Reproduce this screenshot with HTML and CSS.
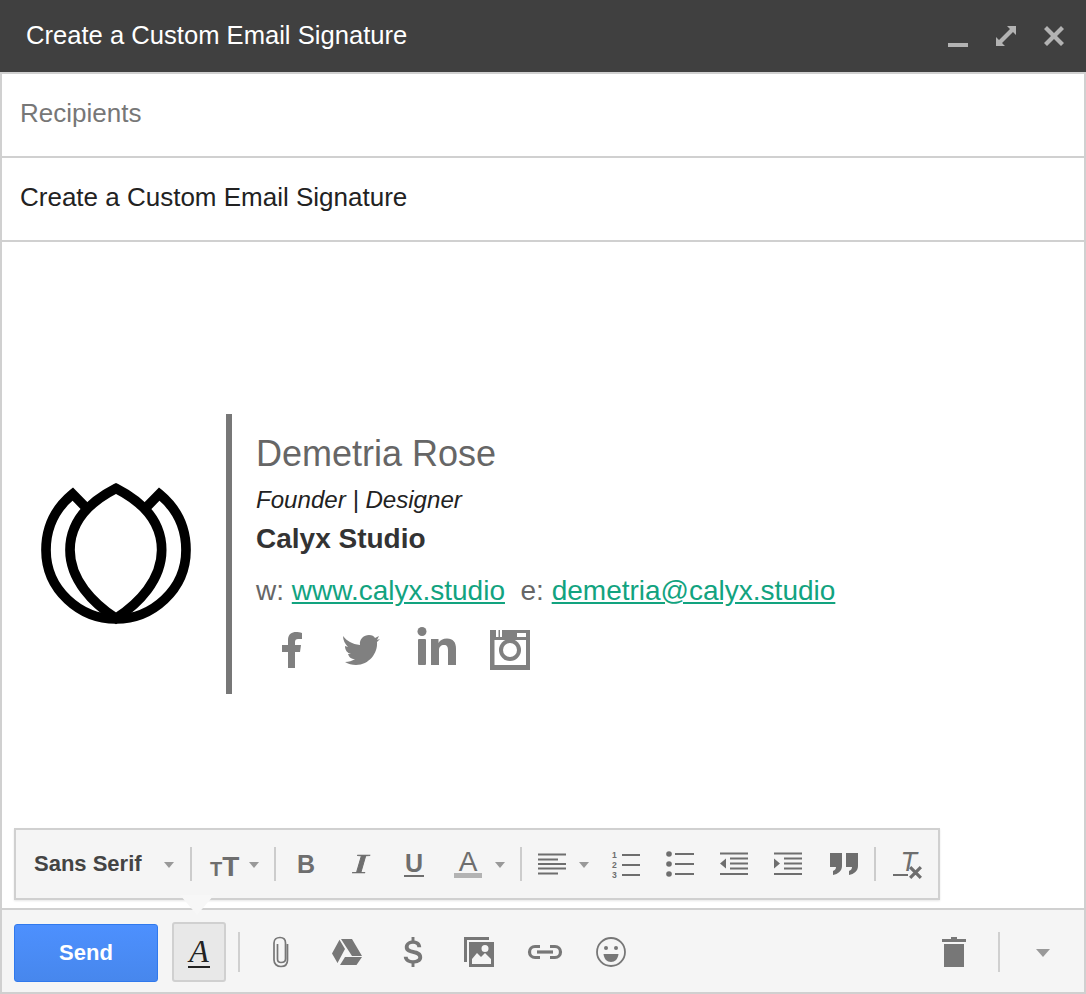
FILE: index.html
```html
<!DOCTYPE html>
<html lang="en">
  <head>
    <meta charset="UTF-8" />
    <meta name="viewport" content="width=device-width, initial-scale=1.0" />
    <title>Create a Custom Email Signature</title>
    <link rel="stylesheet" href="styles.css">
  </head>
  <body>
    <div class="compose">
      <div class="title-bar">
        <span class="title-text">Create a Custom Email Signature</span>
        <div class="title-icons">
          <svg class="title-icon" viewBox="0 0 24 24"><rect x="2" y="19" width="20" height="4" /></svg>
          <svg class="title-icon" viewBox="0 0 24 24"><path d="M2 22V13L5 16L16 5L13 2H22V11L19 8L8 19L11 22Z" /></svg>
          <svg class="title-icon" viewBox="0 0 24 24"><path d="M5 2L12 9L19 2L22 5L15 12L22 19L19 22L12 15L5 22L2 19L9 12L2 5Z" /></svg>
        </div>
      </div>

      <div class="panel">
        <div class="field field-muted">Recipients</div>
        <div class="field">Create a Custom Email Signature</div>

        <div class="message">
          <div class="signature">
            <svg class="logo" viewBox="0 0 570 510" fill="none" stroke="#000" stroke-width="29">
              <path d="M288 55C200 100 150 160 150 240C150 330 220 400 288 445C356 400 425 330 425 240C425 160 376 100 288 55Z" />
              <path d="M195 110L158 72C100 120 78 180 78 240C78 360 180 447 288 447C396 447 498 360 498 240C498 180 476 120 418 72L381 110" />
            </svg>
            <div class="sig-info">
              <div class="sig-name">Demetria Rose</div>
              <div class="sig-role">Founder | Designer</div>
              <div class="sig-company">Calyx Studio</div>
              <div class="sig-contact">
                w: <a href="#">www.calyx.studio</a>&nbsp; e: <a href="#">demetria@calyx.studio</a>
              </div>
              <div class="sig-social">
                <svg class="social-f" viewBox="0 0 20 36"><path d="M6 36V20H0V13H6V8C6 2 10 0 14 0C16 0 18 0 20 1V7H16C14 7 13 8 13 10V13H19L18 20H13V36Z" /></svg>
                <svg class="social-tw" viewBox="0 0 37 31"><path d="M0 2C4 7 9 10 17 11C16 5 21 1 26 1C29 1 31 2 32 4L36 2L34 6L37 5L34 8C35 19 26 31 13 31C9 31 5 30 2 28C6 28 9 27 12 25C8 25 6 23 5 20H8C4 19 2 16 2 12L5 13C2 10 0 6 0 2Z" /></svg>
                <svg class="social-in" viewBox="0 0 39 38"><circle cx="5" cy="4.500" r="4.500" /><rect x="1" y="12" width="8" height="26" rx="1" /><path d="M14 12H21.500V16C23 13 26 11.500 30 11.500C36 11.500 39 15 39 22V38H31V23C31 20 30 18 27 18C24 18 22 20 22 23V38H14Z" /></svg>
                <svg class="social-ig" viewBox="0 0 40 40">
                  <rect width="40" height="40" />
                  <rect class="ig-cut" x="4.500" y="9" width="31.500" height="26" />
                  <rect class="ig-cut" x="6" y="0" width="2.500" height="10" />
                  <rect class="ig-cut" x="10" y="0" width="2" height="10" />
                  <rect class="ig-cut" x="27" y="3" width="9" height="4" />
                  <path d="M4 7H36V10H4Z" />
                  <circle cx="20" cy="20" r="11" />
                  <circle class="ig-cut" cx="20" cy="20" r="7" />
                </svg>
              </div>
            </div>
          </div>

          <div class="format-bar">
            <span class="font-name">Sans Serif</span>
            <span class="caret caret-font"></span>
            <span class="sep"></span>
            <span class="fmt-size"><span class="glyph-small">T</span><span class="glyph-big">T</span></span>
            <span class="caret"></span>
            <span class="sep sep-size"></span>
            <span class="fmt-btn fmt-first"><span class="glyph-b">B</span></span>
            <span class="fmt-btn"><span class="glyph-i">I</span></span>
            <span class="fmt-btn"><span class="glyph-u">U</span></span>
            <span class="fmt-btn"><span class="glyph-a">A</span></span>
            <span class="caret"></span>
            <span class="sep sep-align"></span>
            <span class="fmt-align">
              <svg class="icon" viewBox="0 0 30 22"><path d="M1 1.500H29M1 6.500H21M1 11H29M1 15.500H29M1 20.500H21" class="lines" /></svg>
            </span>
            <span class="caret caret-align"></span>
            <span class="fmt-btn fmt-numbered">
              <span class="num-list">1<br />2<br />3</span>
              <svg class="num-lines" viewBox="0 0 18 24"><path d="M0 2H18M0 12H18M0 22H18" class="lines" /></svg>
            </span>
            <span class="fmt-btn">
              <svg class="icon" viewBox="0 0 28 24"><circle cx="3" cy="2" r="2.800" /><circle cx="3" cy="12" r="2.800" /><circle cx="3" cy="22" r="2.800" /><path d="M9 2H28M9 12H28M9 22H28" class="lines" /></svg>
            </span>
            <span class="fmt-btn">
              <svg class="icon" viewBox="0 0 28 24"><path d="M0 1.500H28M10 6.500H28M10 11.500H28M10 16.500H28M0 22H28" class="lines" /><path d="M6 6.500V16.500L0 11.500Z" /></svg>
            </span>
            <span class="fmt-btn">
              <svg class="icon" viewBox="0 0 28 24"><path d="M0 1.500H28M10 6.500H28M10 11.500H28M10 16.500H28M0 22H28" class="lines" /><path d="M0 6.500V16.500L6 11.500Z" /></svg>
            </span>
            <span class="fmt-btn fmt-quote">
              <svg class="icon" viewBox="0 0 28 22"><path d="M0 0H12V13C12 18 8 21 3 22V18C5 17 6 16 6 14H0ZM16 0H28V13C28 18 24 21 19 22V18C21 17 22 16 22 14H16Z" /></svg>
            </span>
            <span class="sep sep-clear"></span>
            <span class="fmt-btn">
              <span class="clear-format"><span class="glyph-tx">T</span>
                <svg class="clear-x" viewBox="0 0 14 14"><path d="M2 2L12 12M12 2L2 12" class="lines-bold" /></svg>
              </span>
            </span>
          </div>
        </div>

        <div class="footer">
          <span class="notch"></span>
          <button class="send-btn">Send</button>
          <button class="format-toggle"><span>A</span></button>
          <span class="footer-sep"></span>
          <span class="tool">
            <svg class="tool-clip" viewBox="0 0 18 32"><path d="M15.500 8V24C15.500 28 13 30.500 9 30.500C5 30.500 2 28 2 24V7C2 3.500 4.500 1.500 8 1.500C11.500 1.500 13.500 3.500 13.500 7V23C13.500 25 12 26.500 9 26.500C6.500 26.500 5.500 25 5.500 23V8" fill="none" stroke="#777" stroke-width="1.700" /></svg>
          </span>
          <span class="tool">
            <svg class="tool-icon" viewBox="0 0 30 26"><path d="M9 0H20L30 17H20ZM7.500 0.800L13 10L5.500 24L0 14.500ZM13 18H30L24.500 26H8Z" /></svg>
          </span>
          <span class="tool">
            <svg class="tool-icon" viewBox="0 0 19 31"><path d="M8 0H11V3.500C15 4 18 6.500 18 10.500H14C14 8.500 12.500 7 9.500 7C6.500 7 5 8.200 5 10C5 11.800 6.500 12.800 10 13.500C15 14.500 19 16 19 21C19 25 16 27 11 27.500V31H8V27.500C4 27 0 24.500 0 20.500H4C4 22.800 6 24 9.500 24C13 24 15 22.800 15 21C15 19 13 18 9 17.200C4 16.200 1 14.500 1 10.500C1 6.800 4 4 8 3.500Z" /></svg>
          </span>
          <span class="tool">
            <svg class="tool-icon" viewBox="0 0 30 30"><path d="M0 0H25V3H3V25H0Z" /><path fill-rule="evenodd" d="M5 5H30V30H5ZM21 8A3.500 3.500 0 1 0 21 15A3.500 3.500 0 1 0 21 8ZM8 27H27V22L21 16L17 20L13 16L8 22Z" /></svg>
          </span>
          <span class="tool">
            <svg class="tool-link" viewBox="0 0 36 16" fill="none" stroke="#777"><path d="M13 2.500H8A5.500 5.500 0 0 0 8 13.500H13M23 2.500H28A5.500 5.500 0 0 1 28 13.500H23" stroke-width="3.200" /><path d="M10 8H26" stroke-width="3.200" /></svg>
          </span>
          <span class="tool">
            <svg class="tool-icon" viewBox="0 0 30 30"><circle cx="15" cy="15" r="14" fill="none" stroke="#777" stroke-width="1.800" /><circle cx="10" cy="11" r="2" /><circle cx="20" cy="11" r="2" /><path d="M7.500 17H22.500C22 22 19 25 15 25C11 25 8 22 7.500 17Z" /></svg>
          </span>
          <span class="trash">
            <svg class="tool-icon" viewBox="0 0 24 30"><path d="M9 0H15V2H24V5H0V2H9ZM2 7H22V30H2Z" /></svg>
          </span>
          <span class="footer-sep"></span>
          <span class="more-caret"></span>
        </div>
      </div>
    </div>
  </body>
</html>
```

FILE: styles.css
```css
* {
  box-sizing: border-box;
}

body {
  margin: 0;
  font-family: "Liberation Sans", Arial, sans-serif;
}

.compose {
  display: flex;
  flex-direction: column;
  height: 994px;
}

.title-bar {
  display: flex;
  align-items: center;
  justify-content: space-between;
  height: 72px;
  padding: 0 20px 2px 26px;
  background-color: #404040;
}

.title-text {
  color: #fff;
  font-size: 25.600px;
}

.title-icons {
  display: flex;
  gap: 24px;
  margin-top: 2px;
}

.title-icon {
  width: 24px;
  height: 24px;
  fill: #b3b3b3;
}

.panel {
  flex: 1;
  display: flex;
  flex-direction: column;
  min-height: 0;
  border: 2px solid #d0d0d0;
}

.field {
  display: flex;
  align-items: center;
  height: 84px;
  padding: 0 18px 4px;
  border-bottom: 2px solid #d0d0d0;
  font-size: 26px;
  color: #222;
}

.field-muted {
  color: #777;
}

.message {
  flex: 1;
  display: flex;
  flex-direction: column;
  min-height: 0;
  padding-top: 172px;
}

.signature {
  display: flex;
  align-items: center;
}

.logo {
  width: 190px;
  height: 170px;
  margin: 2px 16px 0 18px;
  filter: blur(0.4px);
}

.sig-info {
  height: 280px;
  padding: 20px 0 0 24px;
  border-left: 6px solid #777;
}

.sig-name {
  font-size: 36px;
  line-height: 40px;
  color: #666;
}

.sig-role {
  margin-top: 12px;
  font-size: 24.100px;
  line-height: 28px;
  font-style: italic;
  color: #222;
}

.sig-company {
  margin-top: 9px;
  font-size: 28px;
  line-height: 32px;
  font-weight: bold;
  color: #333;
}

.sig-contact {
  margin-top: 21px;
  font-size: 28px;
  line-height: 30px;
  color: #666;
}

.sig-contact a {
  color: #12a37f;
}

.sig-social {
  display: flex;
  align-items: flex-start;
  height: 44px;
  margin-top: 21px;
  fill: #808080;
  filter: blur(0.5px);
}

.social-f {
  width: 20px;
  height: 36px;
  margin: 5px 0 0 26px;
}

.social-tw {
  width: 37px;
  height: 31px;
  margin: 7px 0 0 41px;
}

.social-in {
  width: 39px;
  height: 38px;
  margin: 0 0 0 37px;
}

.social-ig {
  width: 40px;
  height: 40px;
  margin: 3px 0 0 34px;
}

.ig-cut {
  fill: #fff;
}

.format-bar {
  display: flex;
  align-items: center;
  width: 926px;
  height: 72px;
  margin: auto 0 8px 12px;
  padding-left: 18px;
  background-color: #f5f5f5;
  border: 2px solid #d0d0d0;
  fill: #6e6e6e;
  box-shadow: 0 1px 2px rgba(0, 0, 0, 0.1);
}

.font-name {
  width: 108px;
  font-size: 22px;
  font-weight: bold;
  color: #444;
}

.caret {
  width: 0;
  height: 0;
  border-left: 5.500px solid transparent;
  border-right: 5.500px solid transparent;
  border-top: 6px solid #999;
  margin-top: 2px;
}

.caret-font {
  margin-left: 22px;
}

.sep {
  width: 2px;
  height: 34px;
  margin-left: 16px;
  background-color: #ccc;
}

.fmt-size {
  display: flex;
  align-items: baseline;
  width: 29px;
  margin: 7px 10px 0 18px;
  color: #6e6e6e;
  font-weight: bold;
  line-height: 24px;
}

.glyph-big {
  font-size: 28px;
  margin-left: -1px;
}

.glyph-small {
  font-size: 20px;
  margin-right: 1px;
}

.sep-size {
  margin-left: 15px;
}

.fmt-btn {
  display: flex;
  align-items: center;
  justify-content: center;
  width: 54px;
  height: 36px;
  flex: none;
}

.fmt-first {
  margin-left: 3px;
}

.fmt-btn .icon {
  width: 28px;
  height: 26px;
}

.fmt-numbered {
  margin-top: 2px;
}

.glyph-b {
  font-size: 25px;
  font-weight: bold;
  color: #6e6e6e;
}

.glyph-i {
  display: inline-block;
  font-family: "Liberation Serif", serif;
  font-size: 27px;
  font-style: italic;
  color: #6e6e6e;
  -webkit-text-stroke: 0.6px #6e6e6e;
  transform: scaleX(1.7);
}

.glyph-u {
  font-size: 25px;
  line-height: 24px;
  font-weight: bold;
  color: #6e6e6e;
  border-bottom: 2px solid #6e6e6e;
  padding: 0 1px;
}

.glyph-a {
  width: 28px;
  font-size: 28px;
  line-height: 23px;
  text-align: center;
  color: #6e6e6e;
  border-bottom: 5px solid #b3b3b3;
}

.sep-align {
  margin-left: 15px;
}

.fmt-align {
  display: flex;
  margin-left: 15px;
}

.fmt-align .icon {
  width: 30px;
  height: 22px;
}

.caret-align {
  margin-left: 12px;
  margin-right: 10px;
}

.lines {
  fill: none;
  stroke: #6e6e6e;
  stroke-width: 2;
}

.lines-bold {
  fill: none;
  stroke: #6e6e6e;
  stroke-width: 3;
}

.num-list {
  width: 10px;
  font-size: 8.600px;
  font-weight: bold;
  line-height: 10px;
  color: #6e6e6e;
}

.num-lines {
  width: 18px;
  height: 24px;
}

.fmt-quote {
  margin-left: 2px;
}

.sep-clear {
  margin-left: 3px;
  margin-right: 5px;
}

.clear-format {
  position: relative;
  display: block;
  width: 30px;
  height: 30px;
}

.glyph-tx {
  display: block;
  width: 24px;
  font-size: 27px;
  font-style: italic;
  line-height: 26px;
  text-align: right;
  color: #6e6e6e;
}

.glyph-tx::after {
  content: "";
  position: absolute;
  left: 0;
  top: 25px;
  width: 15px;
  height: 2px;
  background-color: #6e6e6e;
}

.clear-x {
  position: absolute;
  right: 0;
  bottom: -1px;
  width: 15px;
  height: 15px;
}

.footer {
  position: relative;
  display: flex;
  align-items: center;
  flex: none;
  height: 84px;
  padding: 0 0 0 12px;
  background-color: #f5f5f5;
  border-top: 2px solid #d0d0d0;
  fill: #777;
}

.notch {
  position: absolute;
  left: 178px;
  top: -15px;
  width: 34px;
  height: 20px;
  background-color: #f7f7f7;
  clip-path: polygon(0 0, 100% 0, 50% 100%);
}

.send-btn {
  width: 144px;
  height: 58px;
  margin-top: 4px;
  color: #fff;
  font-family: inherit;
  font-size: 22px;
  font-weight: bold;
  background: linear-gradient(#4d90fe, #4787ed);
  border: 1px solid #3079ed;
  border-radius: 3px;
}

.format-toggle {
  width: 54px;
  height: 60px;
  margin-top: 2px;
  margin-left: 14px;
  padding: 0;
  background-color: #e8e8e8;
  border: 2px solid #d0d0d0;
  border-radius: 3px;
}

.format-toggle span {
  font-family: "Liberation Serif", serif;
  font-size: 32px;
  font-style: italic;
  line-height: 29px;
  color: #222;
  display: inline-block;
  border-bottom: 2px solid #222;
  padding: 0 1px;
}

.footer-sep {
  width: 2px;
  height: 40px;
  margin-top: 2px;
  margin-left: 12px;
  background-color: #d0d0d0;
  flex: none;
}

.tool {
  display: flex;
  align-items: center;
  justify-content: center;
  width: 66px;
  margin-top: 2px;
}

.footer-sep + .tool {
  margin-left: 8px;
}

.tool-icon {
  height: 30px;
  width: 30px;
}

.tool-clip {
  width: 18px;
  height: 32px;
}

.tool-link {
  width: 36px;
  height: 16px;
}

.trash {
  display: flex;
  margin-left: auto;
  margin-top: 2px;
  margin-right: 17px;
}

.more-caret {
  width: 0;
  height: 0;
  margin: 4px 34px 0 36px;
  border-left: 7px solid transparent;
  border-right: 7px solid transparent;
  border-top: 8px solid #999;
}
```
